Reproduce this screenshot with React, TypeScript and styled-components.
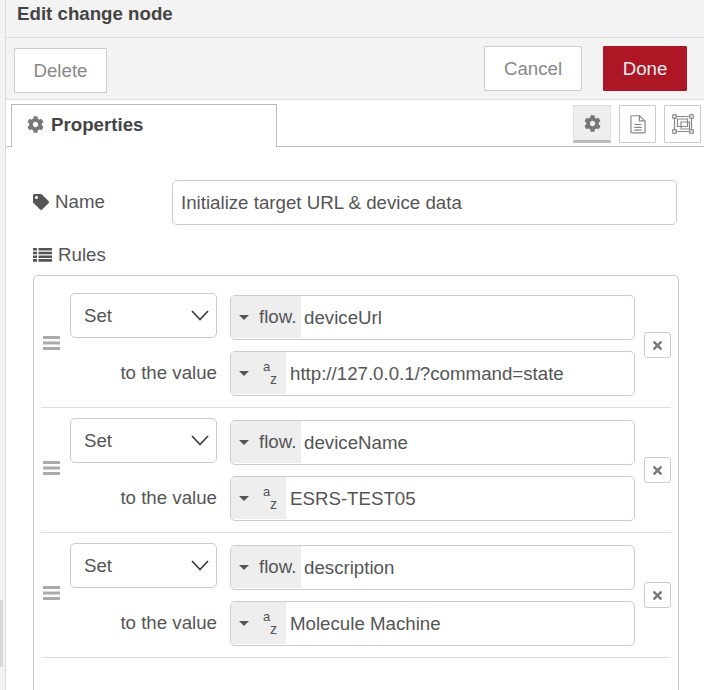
import styled, { createGlobalStyle } from 'styled-components';
import { FaCog, FaTag, FaTimes } from 'react-icons/fa';

const GlobalStyle = createGlobalStyle`
  html, body {
    margin: 0;
    padding: 0;
    background: #fff;
  }
  body {
    width: 704px;
    height: 690px;
    overflow: hidden;
    font-family: "Liberation Sans", Arial, sans-serif;
    font-size: 18.7px;
    color: #555;
  }
`;

const Page = styled.div`
  display: flex;
  width: 704px;
  height: 690px;
  overflow: hidden;
`;

const Strip = styled.div`
  flex: none;
  width: 5px;
  background: #f3f3f3;
  border-right: 1px solid #ddd;
`;

const StripThumb = styled.div`
  width: 3px;
  height: 67px;
  margin-top: 600px;
  background: #d8d8d8;
`;

const Main = styled.div`
  flex: 1;
  min-width: 0;
  display: flex;
  flex-direction: column;
`;

const TitleBar = styled.div`
  flex: none;
  height: 38px;
  box-sizing: border-box;
  padding: 0 0 10px 11px;
  display: flex;
  align-items: center;
  background: #f3f3f3;
  border-bottom: 1px solid #ddd;
  font-weight: 700;
  color: #444;
`;

const Toolbar = styled.div`
  flex: none;
  height: 62px;
  box-sizing: border-box;
  padding: 8px 17px 0 8px;
  display: flex;
  align-items: flex-start;
  background: #f3f3f3;
  border-bottom: 1px solid #ddd;
`;

const ToolButton = styled.div<{ $w: number; $primary?: boolean; $low?: boolean }>`
  width: ${(p) => p.$w}px;
  height: 45px;
  box-sizing: border-box;
  margin-top: ${(p) => (p.$low ? 2 : 0)}px;
  display: flex;
  align-items: center;
  justify-content: center;
  background: ${(p) => (p.$primary ? '#ad1625' : '#fff')};
  border: 1px solid ${(p) => (p.$primary ? '#ad1625' : '#ccc')};
  border-radius: 1px;
  color: ${(p) => (p.$primary ? '#eee' : '#888')};
`;

const Spacer = styled.div<{ $w?: number }>`
  flex: ${(p) => (p.$w ? 'none' : 1)};
  width: ${(p) => p.$w ?? 0}px;
`;

const TabBar = styled.div`
  flex: none;
  height: 47px;
  box-sizing: border-box;
  margin-left: 1px;
  padding: 4px 3px 0 4px;
  display: flex;
  align-items: flex-start;
  border-bottom: 1px solid #bbb;
`;

const Tab = styled.div`
  width: 266px;
  height: 43px;
  box-sizing: border-box;
  padding: 0 0 3px 15px;
  display: flex;
  align-items: center;
  gap: 7px;
  background: #fff;
  border: 1px solid #bbb;
  border-bottom: none;
  font-weight: 700;
  color: #444;
  svg {
    color: #777;
    font-size: 17px;
  }
`;

const TabTools = styled.div`
  margin-left: auto;
  margin-top: 1px;
  display: flex;
  gap: 8px;
`;

const TabTool = styled.div<{ $active?: boolean; $w?: number }>`
  width: ${(p) => p.$w ?? 37}px;
  height: 38px;
  box-sizing: border-box;
  display: flex;
  align-items: center;
  justify-content: center;
  color: #777;
  font-size: 17px;
  background: ${(p) => (p.$active ? '#eee' : '#fff')};
  border: 1px solid ${(p) => (p.$active ? '#ddd' : '#ccc')};
  border-bottom: ${(p) => (p.$active ? '3px solid #bbb' : '1px solid #ccc')};
`;

const Form = styled.div`
  flex: none;
  padding: 33px 25px 0 27px;
`;

const NameRow = styled.div`
  display: flex;
  align-items: center;
`;

const FieldLabel = styled.div`
  display: flex;
  align-items: center;
  gap: 6px;
  color: #555;
  svg {
    flex: none;
    font-size: 16px;
  }
`;

const NameLabel = styled(FieldLabel)`
  width: 139px;
  margin-top: -1px;
`;

const TextInput = styled.div`
  width: 505px;
  height: 45px;
  box-sizing: border-box;
  padding-left: 8px;
  display: flex;
  align-items: center;
  border: 1px solid #ccc;
  border-radius: 5px;
`;

const RulesLabel = styled(FieldLabel)`
  height: 20px;
  margin-top: 20px;
`;

const RuleList = styled.div`
  width: 646px;
  height: 460px;
  margin-top: 10px;
  box-sizing: border-box;
  padding: 7px 7px 0;
  border: 1px solid #ccc;
  border-radius: 5px;
`;

const Rule = styled.div`
  display: flex;
  align-items: center;
  padding: 10px 0 11px;
  border-bottom: 1px solid #ddd;
`;

const Handle = styled.div`
  flex: none;
  width: 27px;
  padding-left: 2px;
  display: flex;
  align-items: center;
  margin-top: -4px;
`;

const RuleFields = styled.div`
  display: flex;
  flex-direction: column;
  gap: 11px;
`;

const RuleLine = styled.div`
  display: flex;
  gap: 13px;
`;

const Select = styled.div`
  width: 147px;
  height: 45px;
  box-sizing: border-box;
  padding: 0 7px 0 13px;
  display: flex;
  align-items: center;
  justify-content: space-between;
  border: 1px solid #ccc;
  border-radius: 5px;
`;

const ValueLabel = styled.div`
  width: 147px;
  text-align: right;
  line-height: 43px;
`;

const TypedInput = styled.div<{ $top?: boolean }>`
  width: 405px;
  height: 45px;
  margin-top: ${(p) => (p.$top ? 2 : 0)}px;
  box-sizing: border-box;
  display: flex;
  align-items: stretch;
  border: 1px solid #ccc;
  border-radius: 5px;
  overflow: hidden;
`;

const TypeButton = styled.div<{ $w: number }>`
  flex: none;
  width: ${(p) => p.$w}px;
  margin-bottom: 1px;
  box-sizing: border-box;
  padding-left: 8px;
  display: flex;
  align-items: center;
  background: #eee;
`;

const Caret = styled.span`
  flex: none;
  width: 0;
  height: 0;
  border-left: 5px solid transparent;
  border-right: 5px solid transparent;
  border-top: 5px solid #555;
`;

const TypeName = styled.span`
  margin-left: 10px;
`;

const AzMark = styled.span`
  margin-left: 14px;
  width: 14px;
  display: flex;
  flex-direction: column;
  font-size: 13px;
  line-height: 12px;
  span:last-child {
    align-self: flex-end;
    font-size: 14px;
  }
`;

const TypedValue = styled.div<{ $pad: number }>`
  padding-left: ${(p) => p.$pad}px;
  display: flex;
  align-items: center;
`;

const RemoveButton = styled.div`
  margin: 1px 0 0 auto;
  width: 27px;
  height: 26px;
  box-sizing: border-box;
  display: flex;
  align-items: center;
  justify-content: center;
  border: 1px solid #ccc;
  border-radius: 3px;
  color: #777;
  font-size: 13px;
`;

const ListIcon = () => (
  <svg width="19" height="14" viewBox="0 0 19 14" fill="#555">
    <path d="M0 0h4v2.600H0zM5.500 0H19v2.600H5.500zM0 3.700h4v2.600H0zM5.500 3.700H19v2.600H5.500zM0 7.400h4V10H0zM5.500 7.400H19V10H5.500zM0 11.100h4v2.600H0zM5.500 11.100H19v2.600H5.500z" />
  </svg>
);

const HandleIcon = () => (
  <svg width="17" height="14" viewBox="0 0 17 14" fill="#aaa">
    <rect x="0" y="0" width="17" height="3" />
    <rect x="0" y="5.5" width="17" height="3" />
    <rect x="0" y="11" width="17" height="3" />
  </svg>
);

const Chevron = () => (
  <svg width="18" height="11" viewBox="0 0 18 11" fill="none" stroke="#444" strokeWidth="1.8">
    <path d="M1 1l8 8.500L17 1" />
  </svg>
);

const DocIcon = () => (
  <svg width="16" height="19" viewBox="0 0 17 20" fill="none" stroke="#888" strokeWidth="1.3">
    <path d="M1 1.500a.8.8 0 0 1 .8-.8H10l6 5.500v12a.8.8 0 0 1-.8.8H1.800a.8.8 0 0 1-.8-.8z" />
    <path d="M10 .7v5.500h6M4.500 10h8M4.500 13h8M4.500 16h8" />
  </svg>
);

const FrameIcon = () => (
  <svg width="22" height="20" viewBox="0 0 22 20" fill="none" stroke="#888" strokeWidth="1.2">
    <path d="M2.500 2.500h17v15h-17z" />
    <path d="M5.500 5h10v7.500h-10z" fill="#fff" />
    <path d="M9 8h8.500v7H9z" />
    <g fill="#fff">
      <rect x="0.800" y="0.800" width="3.400" height="3.400" />
      <rect x="17.800" y="0.800" width="3.400" height="3.400" />
      <rect x="0.800" y="15.800" width="3.400" height="3.400" />
      <rect x="17.800" y="15.800" width="3.400" height="3.400" />
    </g>
  </svg>
);

interface RuleData {
  property: string;
  value: string;
}

const rules: RuleData[] = [
  { property: 'deviceUrl', value: 'http://127.0.0.1/?command=state' },
  { property: 'deviceName', value: 'ESRS-TEST05' },
  { property: 'description', value: 'Molecule Machine' },
];

export default function App() {
  return (
    <>
      <GlobalStyle />
      <Page>
        <Strip>
          <StripThumb />
        </Strip>
        <Main>
          <TitleBar>Edit change node</TitleBar>
          <Toolbar>
            <ToolButton $w={93} $low>Delete</ToolButton>
            <Spacer />
            <ToolButton $w={98}>Cancel</ToolButton>
            <Spacer $w={21} />
            <ToolButton $w={84} $primary>Done</ToolButton>
          </Toolbar>
          <TabBar>
            <Tab>
              <FaCog />
              Properties
            </Tab>
            <TabTools>
              <TabTool $active $w={38}><FaCog /></TabTool>
              <TabTool><DocIcon /></TabTool>
              <TabTool><FrameIcon /></TabTool>
            </TabTools>
          </TabBar>
          <Form>
            <NameRow>
              <NameLabel>
                <FaTag />
                Name
              </NameLabel>
              <TextInput>Initialize target URL &amp; device data</TextInput>
            </NameRow>
            <RulesLabel>
              <ListIcon />
              Rules
            </RulesLabel>
            <RuleList>
              {rules.map((rule) => (
                <Rule key={rule.property}>
                  <Handle><HandleIcon /></Handle>
                  <RuleFields>
                    <RuleLine>
                      <Select>
                        Set
                        <Chevron />
                      </Select>
                      <TypedInput $top>
                        <TypeButton $w={70}>
                          <Caret />
                          <TypeName>flow.</TypeName>
                        </TypeButton>
                        <TypedValue $pad={3}>{rule.property}</TypedValue>
                      </TypedInput>
                    </RuleLine>
                    <RuleLine>
                      <ValueLabel>to the value</ValueLabel>
                      <TypedInput>
                        <TypeButton $w={55}>
                          <Caret />
                          <AzMark>
                            <span>a</span>
                            <span>z</span>
                          </AzMark>
                        </TypeButton>
                        <TypedValue $pad={4}>{rule.value}</TypedValue>
                      </TypedInput>
                    </RuleLine>
                  </RuleFields>
                  <RemoveButton><FaTimes /></RemoveButton>
                </Rule>
              ))}
            </RuleList>
          </Form>
        </Main>
      </Page>
    </>
  );
}
